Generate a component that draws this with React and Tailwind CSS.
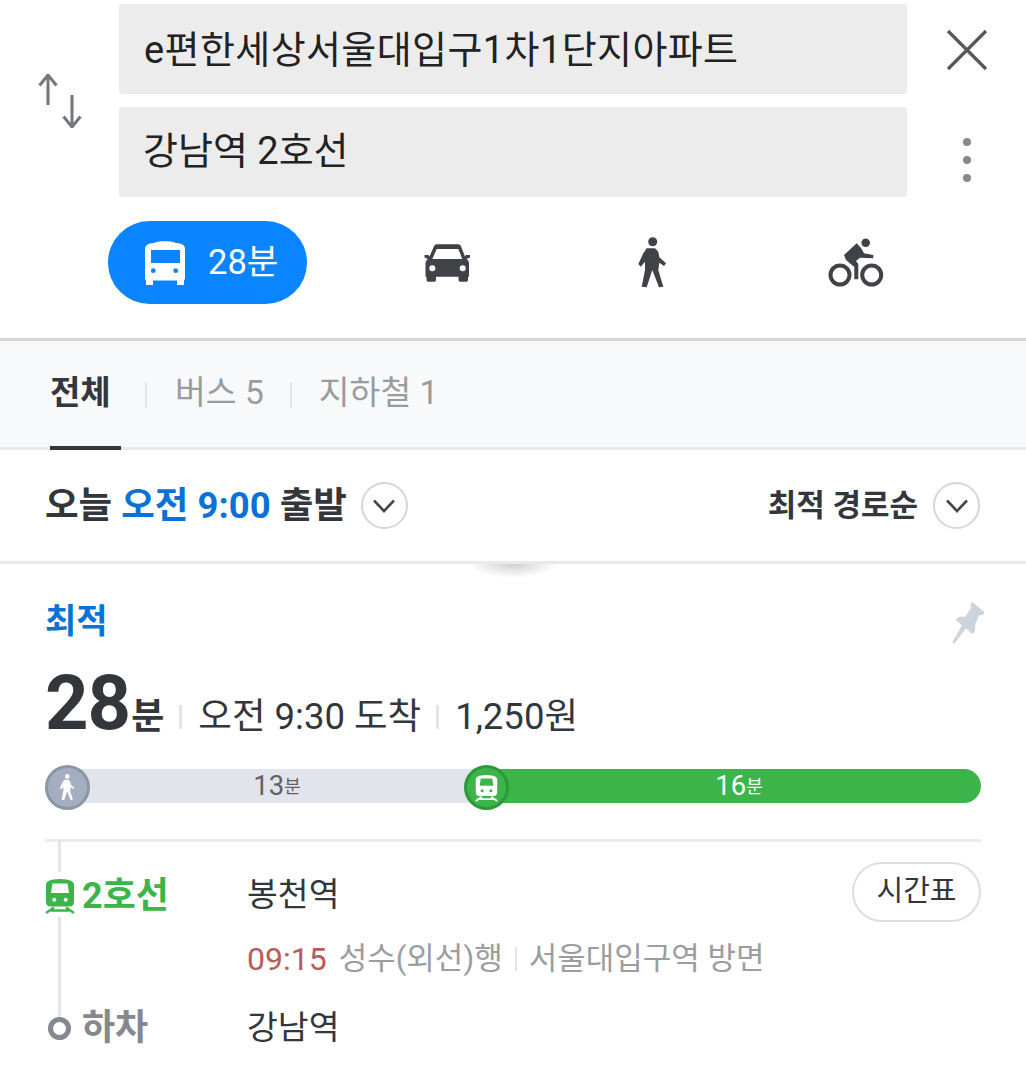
import React from "react"

function SwapIcon() {
    return (
        <svg width="44" height="54" viewBox="0 0 44 54" fill="none" stroke="#74787d" strokeWidth="3">
            <path d="M10 1v30M1.500 11.500 10 1l8.500 10.500" />
            <path d="M34 21v32M25.500 42.500 34 53l8.500-10.500" />
        </svg>
    )
}

function BusIcon() {
    return (
        <svg width="42" height="46" viewBox="0 0 42 46" fill="#fff">
            <path fillRule="evenodd" d="M1 9C1 5 4 3.500 10 3 13 .5 29 .5 32 3c6 .5 9 2 9 6v29c0 1-.5 2-1 2.500V45h-7v-4.500H9V45H2v-4.500C1.500 40 1 39 1 38V9Zm6 1v13h29V10H7Z" />
            <circle cx="9.300" cy="30.700" r="2.400" fill="#0a84ff" />
            <circle cx="31.700" cy="30.700" r="2.400" fill="#0a84ff" />
        </svg>
    )
}

function CarIcon() {
    return (
        <svg width="48" height="38" viewBox="0 0 48 38" fill="#3f4247">
            <path fillRule="evenodd" d="M13 .3h21c1.500 0 2.500 .7 3 2l4 10.200 1-1.500h4v2.500l-3.500 1.500c1.500 1 2.500 2.500 2.500 4.500v13.200h-1V36c0 1-.7 1.700-1.700 1.700h-6c-1 0-1.800-.7-1.800-1.700v-3.300H12V36c0 1-.8 1.700-1.800 1.700h-6C3.200 37.700 2.500 37 2.500 36v-3.300h-1V19.500c0-2 1-3.500 2.500-4.500L.500 13.500V11h4l1 1.500 4.500-10.200C10.500 1 11.500 .3 13 .3ZM12.700 5 8.300 15h30l-4-10H12.700Z" />
            <circle cx="8.300" cy="24.300" r="3" fill="#fff" />
            <circle cx="38.700" cy="24.300" r="3" fill="#fff" />
        </svg>
    )
}

function WalkIcon({ color = "#3f4247", width = 30, height = 52 }) {
    return (
        <svg width={width} height={height} viewBox="0 0 30 52" fill={color}>
            <circle cx="14.700" cy="4.700" r="4.500" />
            <path d="M5.300 16.300 8.700 11.300H17l3.300 3.400 1 5.600 6.700 6-2 2.700-4.700-3.300-1 7.300 5 16.700-4.300.6-6.700-17.300-5.600 17.300-5-.6L7 33v-8.300l-4.300 5-2.400-2.700 5-10.700Z" />
        </svg>
    )
}

function BikeIcon() {
    return (
        <svg width="56" height="50" viewBox="0 0 56 50" fill="none">
            <circle cx="37.700" cy="4.800" r="4.300" fill="#3f4247" />
            <circle cx="12" cy="37" r="9.500" stroke="#3f4247" strokeWidth="4" />
            <circle cx="43.700" cy="37" r="9.500" stroke="#3f4247" strokeWidth="4" />
            <path fill="#3f4247" d="M28.700 5.300 33 10l3 5.300 9.300 1.700v3.300L32 19.700 28 23l2.300 3v15.300h-4V29L18 22l-2-5L28.700 5.300Z" />
        </svg>
    )
}

function TrainIcon({ color = "#fff", glass = "#3cb44a", width = 30, height = 36 }) {
    return (
        <svg width={width} height={height} viewBox="0 0 30 36" fill={color}>
            <path fillRule="evenodd" d="M1 7C1 3 5 1.500 15 1c10 .5 14 2 14 6v17c0 3-2 4.500-4 4.500H5c-2 0-4-1.500-4-4.500V7Zm6.500-1.500L6 15h18L22.500 5.500h-15Z" />
            <circle cx="9.300" cy="21.700" r="2" fill={glass} />
            <circle cx="20.700" cy="21.700" r="2" fill={glass} />
            <path d="M9 29.500 1 35M21 29.500 29 35M6 32.500h18" fill="none" stroke={color} strokeWidth="2.400" />
        </svg>
    )
}

function Chevron() {
    return (
        <span className="flex h-[47px] w-[47px] items-center justify-center rounded-full border-2 border-[#d4d6d9]">
            <svg width="24" height="14" viewBox="0 0 24 14" fill="none" stroke="#44474c" strokeWidth="2.600">
                <path d="M2 1.500 12 12 22 1.500" />
            </svg>
        </span>
    )
}

function PinIcon() {
    return (
        <svg width="36" height="44" viewBox="0 0 36 44" fill="#cdd3da">
            <path d="M21 1.500c1-.8 2.200-.8 3 0l10.500 9c.8 .8 .8 2 0 2.700-1.200 1-2.700 1.300-4.200 .8L26 24c.8 3 .3 5.800-1.300 8-.7 1-1.600 1-2.400 .3l-5.300-5-11.500 15c-.6 .8-2.300-.2-1.900-1.200l9.300-16.600-5.300-5c-.8-.8-.7-1.700 .2-2.300 2.400-1.500 5.200-1.800 8-1L22 7c-.7-2-.5-4 1-5.500Z" />
        </svg>
    )
}

export default function App() {
    return (
        <div className="h-[1089px] w-[1026px] overflow-hidden bg-white font-['Roboto','Noto_Sans_CJK_KR',sans-serif] text-[#33363b]">
            {/* 검색 영역 */}
            <div className="h-[341px] border-b-[3px] border-[#d6d6d6]">
                <div className="flex pt-1">
                    <div className="flex w-[119px] justify-center pt-[70px]">
                        <SwapIcon />
                    </div>
                    <div className="flex w-[788px] flex-col gap-[13px]">
                        <div className="flex h-[90px] items-center rounded-[3px] bg-[#ececec] pt-[2px] pl-[25px] text-[38px] tracking-[0.4px] text-[#222]">
                            e편한세상서울대입구1차1단지아파트
                        </div>
                        <div className="flex h-[90px] items-center rounded-[3px] bg-[#ececec] pb-[1px] pl-[24px] text-[38px] text-[#222]">
                            강남역 2호선
                        </div>
                    </div>
                    <div className="flex flex-1 flex-col items-center pt-[24px]">
                        <svg width="44" height="44" viewBox="0 0 44 44" stroke="#55585c" strokeWidth="3.200">
                            <path d="M3 3l38 38M41 3 3 41" />
                        </svg>
                        <div className="mt-[66px] flex flex-col gap-[10px]">
                            <span className="h-[8px] w-[8px] rounded-full bg-[#85888c]"></span>
                            <span className="h-[8px] w-[8px] rounded-full bg-[#85888c]"></span>
                            <span className="h-[8px] w-[8px] rounded-full bg-[#85888c]"></span>
                        </div>
                    </div>
                </div>

                <div className="mt-[24px] flex items-center pl-[108px]">
                    <div className="flex h-[83px] w-[199px] items-center gap-[22px] rounded-full bg-[#0a84ff] pl-[36px] text-[34.500px] text-white">
                        <BusIcon />
                        <span>28분</span>
                    </div>
                    <div className="ml-[117px]">
                        <CarIcon />
                    </div>
                    <div className="ml-[166px]">
                        <WalkIcon />
                    </div>
                    <div className="ml-[160px]">
                        <BikeIcon />
                    </div>
                </div>
            </div>

            {/* 탭 */}
            <div className="flex h-[109px] items-start border-b-[3px] border-[#e9eaec] bg-[#f8f9fb] pl-[50px]">
                <div className="flex h-[109px] w-[71px] border-b-[4px] border-[#33363b] pt-[31px] text-[33px] leading-[42px] font-bold">전체</div>
                <span className="mt-[41px] ml-[24px] h-[26px] w-[2px] bg-[#e3e4e6]"></span>
                <div className="mt-[31px] ml-[28px] text-[33.500px] leading-[42px] text-[#999b9e]">버스 5</div>
                <span className="mt-[41px] ml-[26px] h-[26px] w-[2px] bg-[#e3e4e6]"></span>
                <div className="mt-[31px] ml-[27px] text-[33.500px] leading-[42px] text-[#999b9e]">지하철 1</div>
            </div>

            {/* 출발 시간, 정렬 */}
            <div className="flex h-[114px] items-center justify-between border-b-[3px] border-[#e8e9eb] pr-[46px] pl-[45px]">
                <div className="flex items-center gap-[14px]">
                    <span className="pt-[2px] text-[36.500px] font-bold">
                        오늘 <span className="text-[#0a72d6]">오전 9:00</span> 출발
                    </span>
                    <Chevron />
                </div>
                <div className="flex items-center gap-[15px]">
                    <span className="pt-[2px] text-[31px] font-bold">최적 경로순</span>
                    <Chevron />
                </div>
            </div>
            <div className="mx-auto h-[14px] w-[90px] bg-[radial-gradient(ellipse_at_top,#cfd0d1,#ffffff00_70%)]"></div>

            {/* 경로 카드 */}
            <div className="px-[45px] pt-[21px]">
                <div className="flex items-start justify-between">
                    <span className="text-[34px] leading-[44px] font-bold text-[#0a72d6]">최적</span>
                    <span className="-mr-[4px] mt-[2px]">
                        <PinIcon />
                    </span>
                </div>
                <div className="mt-[16px] flex h-[84px] items-baseline">
                    <span className="text-[76px] leading-[84px] font-bold tracking-[-1px]">28</span>
                    <span className="ml-[1px] text-[36px] font-bold">분</span>
                    <span className="mb-[16px] ml-[15px] h-[24px] w-[3px] self-end bg-[#e3e4e6]"></span>
                    <span className="ml-[16px] text-[36.500px]">오전 9:30 도착</span>
                    <span className="mb-[16px] ml-[15px] h-[24px] w-[3px] self-end bg-[#e3e4e6]"></span>
                    <span className="ml-[16px] text-[36.500px]">1,250원</span>
                </div>

                <div className="relative mt-[24px] flex h-[34px] w-[936px]">
                    <div className="flex w-[435px] items-center justify-center rounded-l-full bg-[#e1e5eb] pl-[29px] text-[27.500px] text-[#5f6266]">
                        13<span className="text-[18px]">분</span>
                    </div>
                    <div className="flex flex-1 items-center justify-center rounded-r-full bg-[#3cb44a] pl-[17px] text-[27.500px] text-white">
                        16<span className="text-[18px]">분</span>
                    </div>
                    <span className="absolute top-[-4px] left-0 flex h-[45px] w-[45px] items-center justify-center rounded-full border-[3px] border-[#8c97a6] bg-[#a3afc0]">
                        <WalkIcon color="#fff" width={17} height={27} />
                    </span>
                    <span className="absolute top-[-4px] left-[419px] flex h-[45px] w-[45px] items-center justify-center rounded-full border-[3px] border-[#2c9a3a] bg-[#3cb44a]">
                        <TrainIcon width={23} height={28} />
                    </span>
                </div>

                <div className="relative mt-[36px] border-t-[3px] border-[#e8ebef]">
                    <span className="absolute top-[-2px] left-[13px] h-[32px] w-[3px] bg-[#e1e5ea]"></span>
                    <span className="absolute top-[75px] left-[13px] h-[100px] w-[3px] bg-[#e1e5ea]"></span>
                    <div className="flex items-start pt-[20px]">
                        <div className="flex w-[202px] items-center pt-[14px]">
                            <TrainIcon color="#3cb44a" glass="#fff" width={30} height={36} />
                            <span className="ml-[7px] text-[36px] leading-[40px] font-bold text-[#3cb44a]">2호선</span>
                        </div>
                        <div className="flex-1 pt-[11px] text-[33.500px] leading-[44px]">봉천역</div>
                        <div className="flex h-[60px] w-[129px] items-center justify-center rounded-full border-2 border-[#dcdee0] text-[29px]">시간표</div>
                    </div>
                    <div className="mt-[15px] flex items-center pl-[202px] text-[31px] leading-[44px] text-[#9b9da0]">
                        <span className="text-[32px] text-[#b85c5c]">09:15</span>
                        <span className="ml-[12px]">성수(외선)행</span>
                        <span className="mx-[12px] h-[24px] w-[2px] bg-[#e3e4e6]"></span>
                        <span>서울대입구역 방면</span>
                    </div>
                    <div className="mt-[25px] flex items-center">
                        <div className="flex w-[202px] items-center">
                            <span className="ml-[3px] h-[23px] w-[23px] rounded-full border-[5px] border-[#85888e]"></span>
                            <span className="ml-[11px] text-[36px] leading-[44px] font-bold text-[#85888e]">하차</span>
                        </div>
                        <div className="text-[33.500px] leading-[44px]">강남역</div>
                    </div>
                </div>
            </div>
        </div>
    )
}
